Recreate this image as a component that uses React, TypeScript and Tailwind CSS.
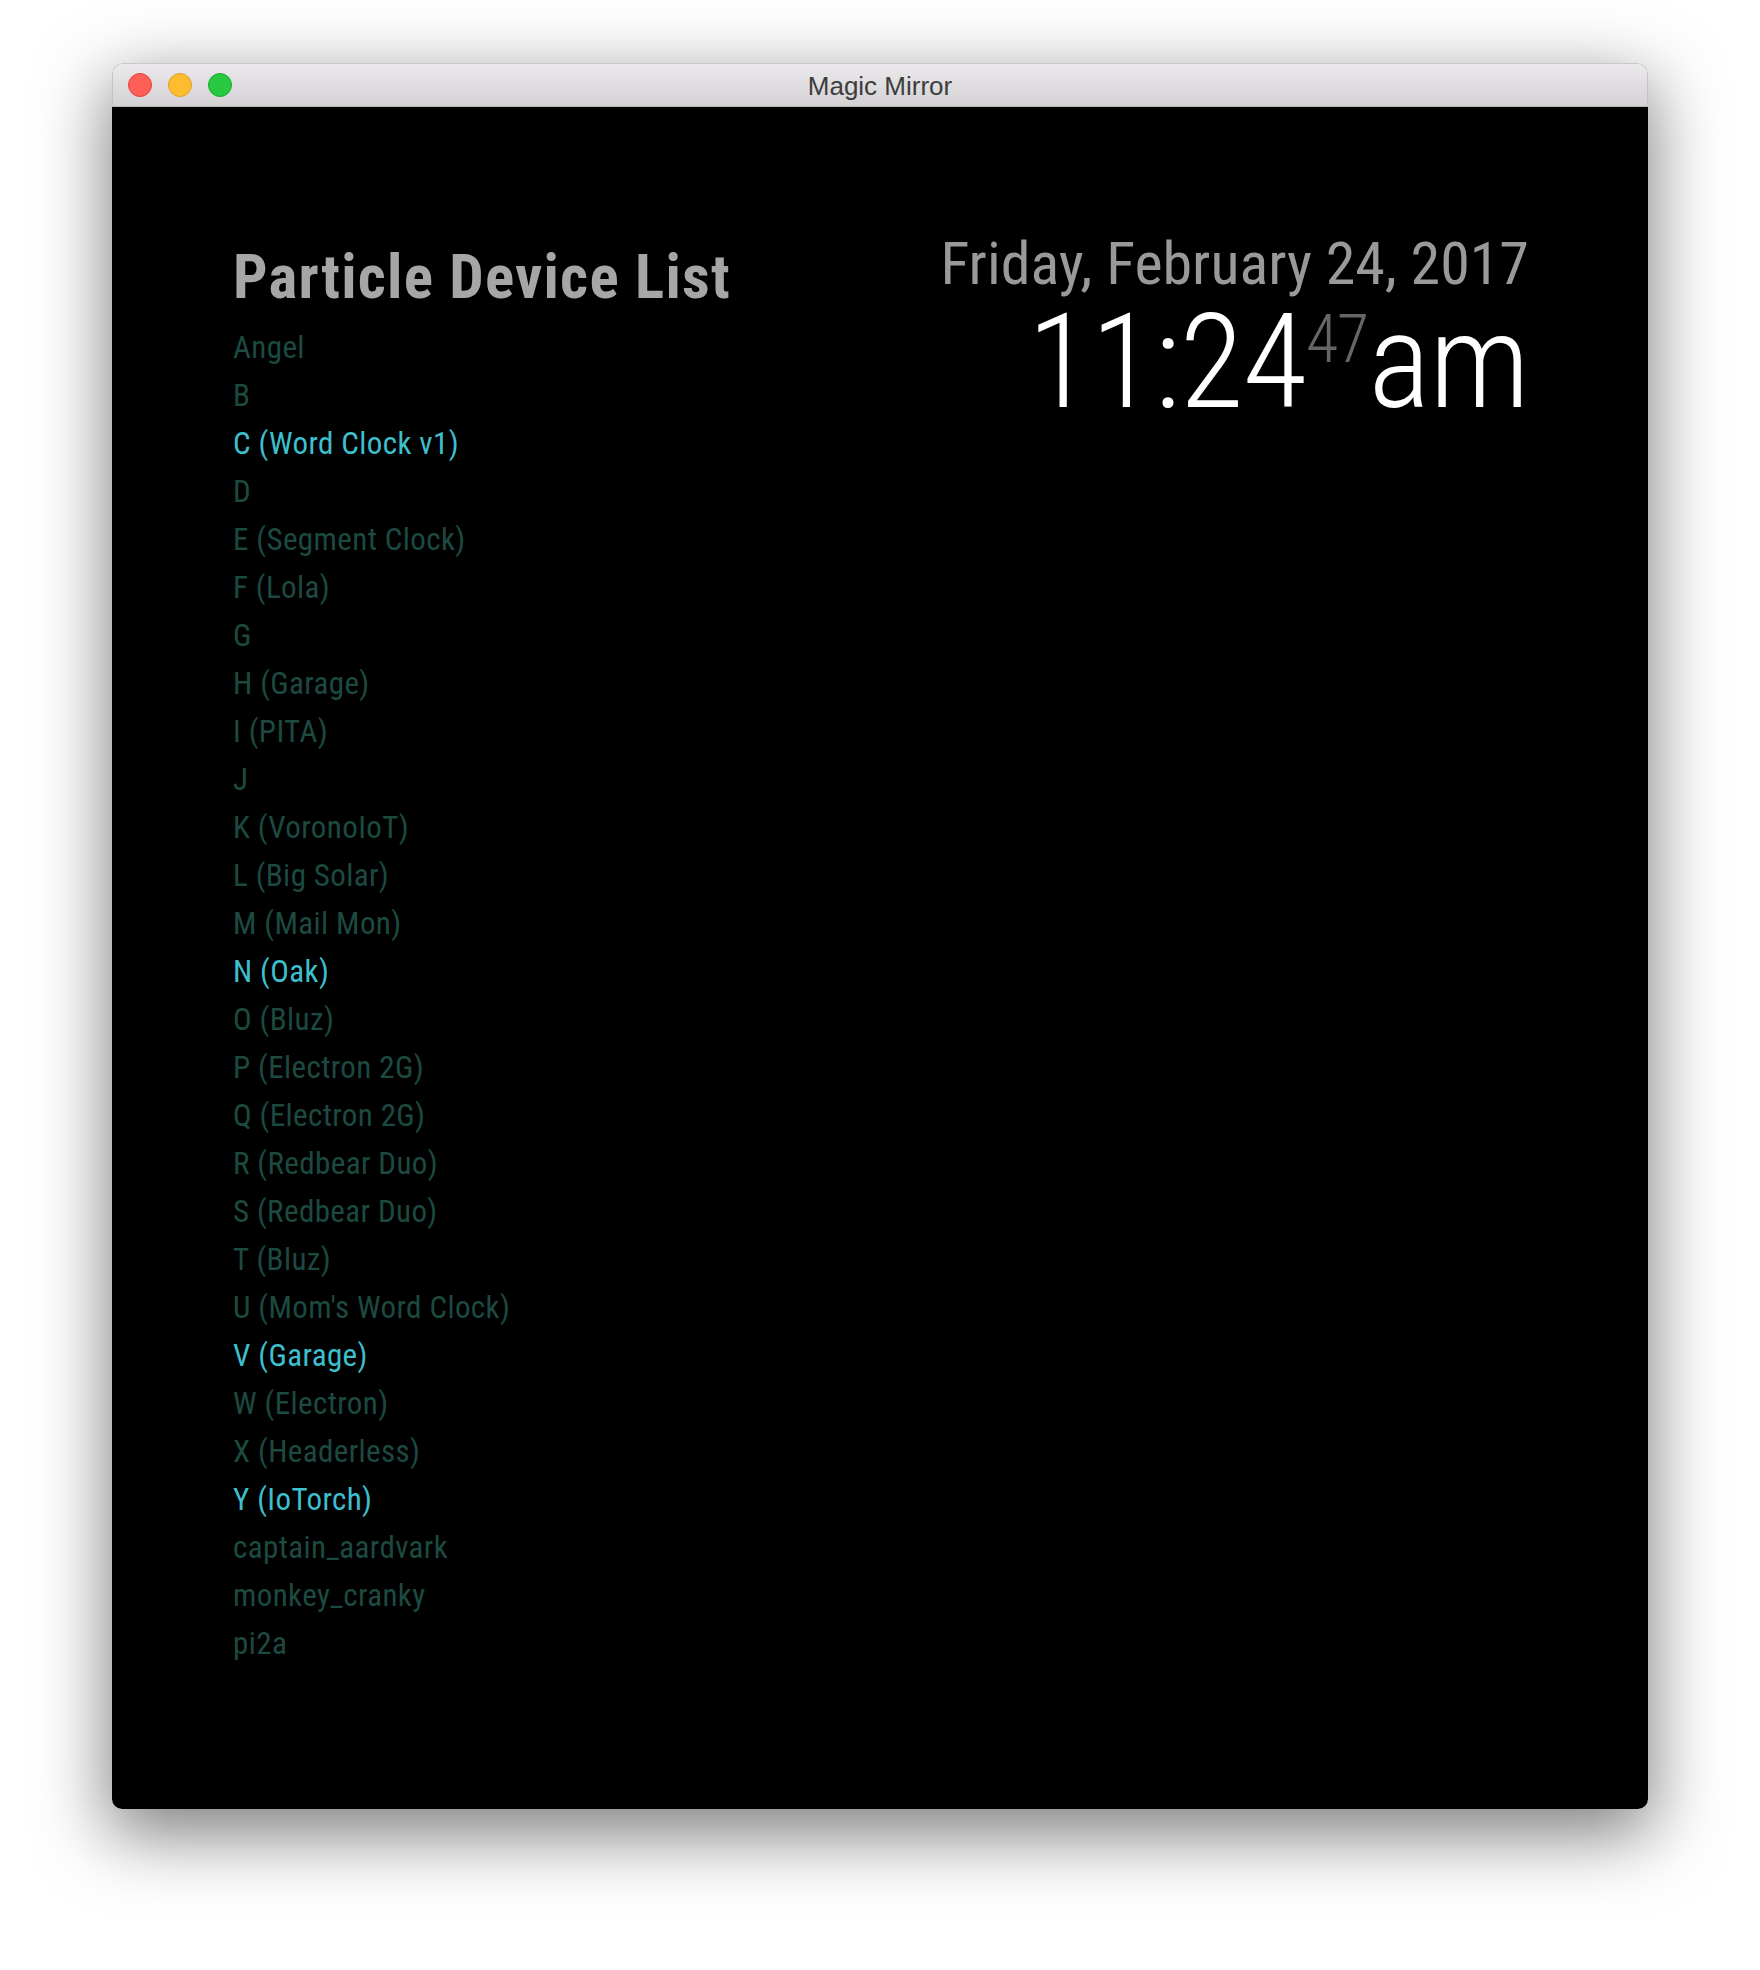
import React from "react";

type Device = {
  name: string;
  online?: boolean;
};

const devices: Device[] = [
  { name: "Angel" },
  { name: "B" },
  { name: "C (Word Clock v1)", online: true },
  { name: "D" },
  { name: "E (Segment Clock)" },
  { name: "F (Lola)" },
  { name: "G" },
  { name: "H (Garage)" },
  { name: "I (PITA)" },
  { name: "J" },
  { name: "K (VoronoIoT)" },
  { name: "L (Big Solar)" },
  { name: "M (Mail Mon)" },
  { name: "N (Oak)", online: true },
  { name: "O (Bluz)" },
  { name: "P (Electron 2G)" },
  { name: "Q (Electron 2G)" },
  { name: "R (Redbear Duo)" },
  { name: "S (Redbear Duo)" },
  { name: "T (Bluz)" },
  { name: "U (Mom's Word Clock)" },
  { name: "V (Garage)", online: true },
  { name: "W (Electron)" },
  { name: "X (Headerless)" },
  { name: "Y (IoTorch)", online: true },
  { name: "captain_aardvark" },
  { name: "monkey_cranky" },
  { name: "pi2a" },
];

function TrafficLights() {
  return (
    <div className="flex items-center gap-4">
      <span className="h-6 w-6 rounded-full border border-[#e0443e] bg-[#fe5f57]" />
      <span className="h-6 w-6 rounded-full border border-[#dea123] bg-[#febc2e]" />
      <span className="h-6 w-6 rounded-full border border-[#1aab29] bg-[#28c840]" />
    </div>
  );
}

function DeviceList() {
  return (
    <div className="mt-[13px]">
      <h1 className="text-[61px] font-bold leading-none tracking-[1.2px] text-[#a6a6a6]">
        Particle Device List
      </h1>
      <ul className="mt-[16px] text-[31px] font-normal leading-[48px] tracking-[0.4px]">
        {devices.map((d) => (
          <li
            key={d.name}
            className={d.online ? "text-[#3dbfcd]" : "text-[#1c4a40]"}
          >
            {d.name}
          </li>
        ))}
      </ul>
    </div>
  );
}

function Clock() {
  return (
    <div className="text-right">
      <div className="text-[60px] leading-none text-[#999999]">
        Friday, February 24, 2017
      </div>
      <div className="mt-[2px] text-[132px] font-light leading-none tracking-[-1px] text-white">
        11:24
        <span className="align-super text-[66px] text-[#666666]">47</span>
        am
      </div>
    </div>
  );
}

export default function App() {
  return (
    <div className="min-h-[1970px] w-[1760px] bg-white pl-[112px] pt-[63px]">
      <div className="flex h-[1746px] w-[1536px] flex-col overflow-hidden rounded-[10px] shadow-[0_22px_70px_4px_rgba(0,0,0,0.5)]">
        {/* title bar */}
        <div className="relative flex h-[44px] shrink-0 items-center rounded-t-[10px] border border-b-[#b4b2b4] border-t-[#c9c9c9] border-x-[#c4c4c4] bg-gradient-to-b from-[#ebe9eb] to-[#d4d2d4] pl-[15px]">
          <TrafficLights />
          <div className="absolute inset-0 flex items-center justify-center pt-[2px] font-['Helvetica_Neue','Liberation_Sans',Arial,sans-serif] text-[26px] text-[#3d3d3d]">
            Magic Mirror
          </div>
        </div>

        {/* mirror */}
        <div className="flex flex-1 items-start justify-between bg-black pl-[121px] pr-[119px] pt-[127px] font-['Roboto_Condensed',Roboto,sans-serif] font-stretch-[87.5%]">
          <DeviceList />
          <Clock />
        </div>
      </div>
    </div>
  );
}
